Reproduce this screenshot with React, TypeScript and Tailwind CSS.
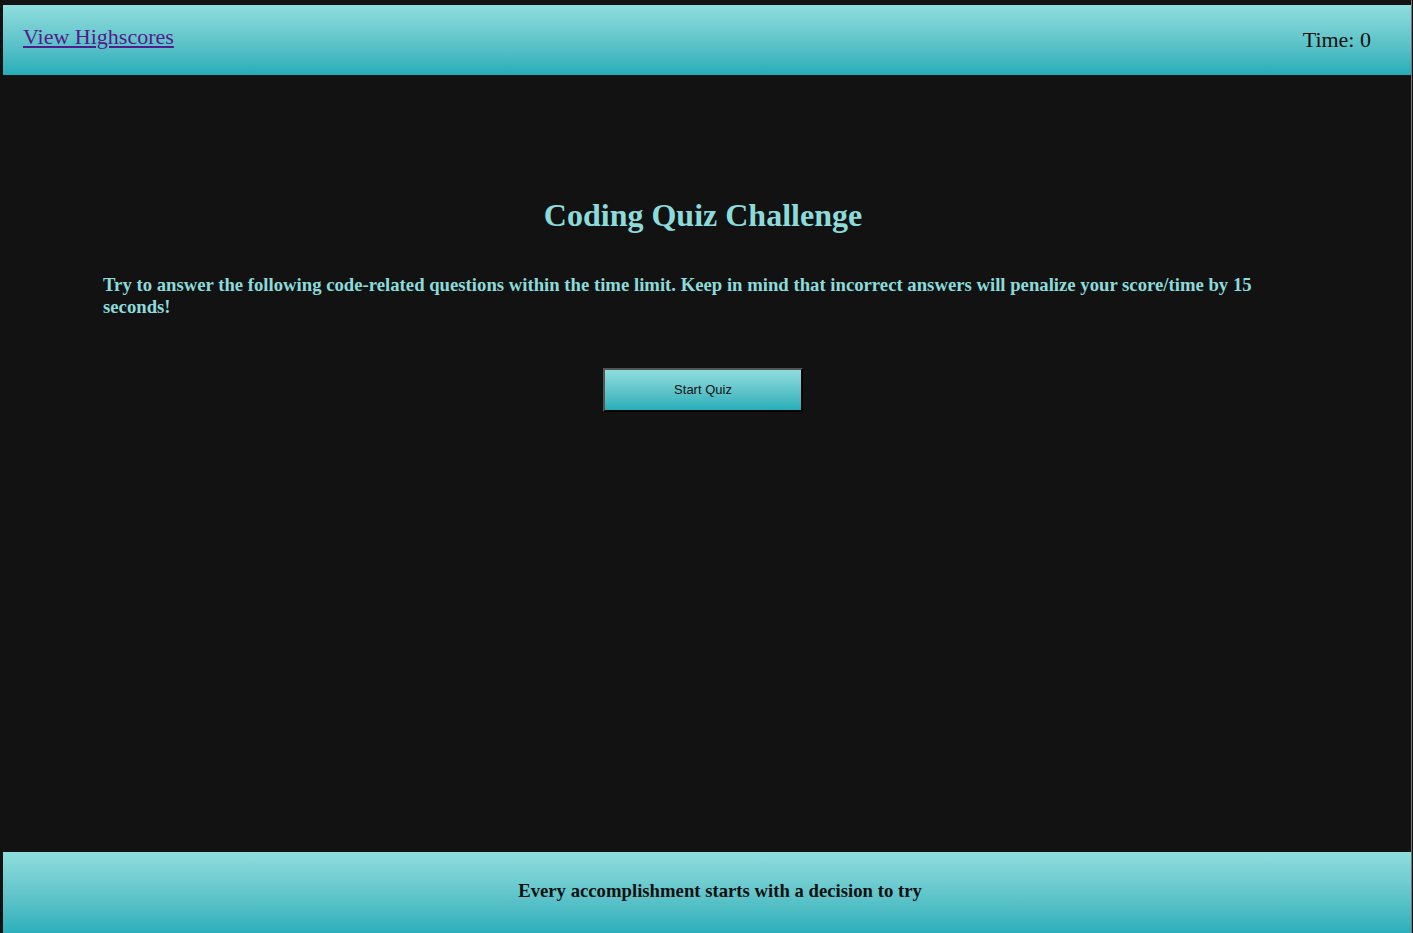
export default function App() {
  return (
    <div className="h-[933px] w-[1413px] overflow-hidden bg-[#121212] flex">
      <div className="w-[1411px] shrink-0 pl-[3px] pt-[5px] flex flex-col font-['Liberation_Serif',serif]">
        <header className="h-[70px] shrink-0 flex items-start justify-between bg-gradient-to-b from-[#8fdddd] to-[#21aeb9]">
          <a
            href="#"
            className="mt-[19px] ml-[20px] text-[22px] leading-[26px] text-[#551a8b] underline"
          >
            View Highscores
          </a>
          <span className="mt-[22px] mr-[40px] text-[22px] leading-[26px] text-[#111]">
            Time: 0
          </span>
        </header>

        <main className="h-[777px] shrink-0 flex flex-col items-center pt-[122px] pr-[8px]">
          <h1 className="text-[32px] leading-[37px] font-bold text-[#8cdada]">
            Coding Quiz Challenge
          </h1>
          <p className="mt-[40px] pl-[100px] pr-[92px] w-full text-[18.72px] leading-[22px] font-bold text-[#8cdada]">
            Try to answer the following code-related questions within the time limit. Keep in mind that incorrect
            answers will penalize your score/time by 15 seconds!
          </p>
          <button className="mt-[50px] w-[200px] h-[44px] border-2 border-t-[#555] border-l-[#555] border-r-black border-b-black bg-gradient-to-b from-[#8fdddd] to-[#21aeb9] font-['Liberation_Sans',sans-serif] text-[13px] text-[#111]">
            Start Quiz
          </button>
        </main>

        <footer className="h-[84px] shrink-0 flex justify-center pl-[26px] pt-[28px] bg-gradient-to-b from-[#8fdddd] to-[#21aeb9]">
          <p className="text-[18.72px] leading-[22px] font-bold text-[#111]">
            Every accomplishment starts with a decision to try
          </p>
        </footer>
      </div>
      <div className="w-px shrink-0 bg-[#777]" />
    </div>
  );
}
